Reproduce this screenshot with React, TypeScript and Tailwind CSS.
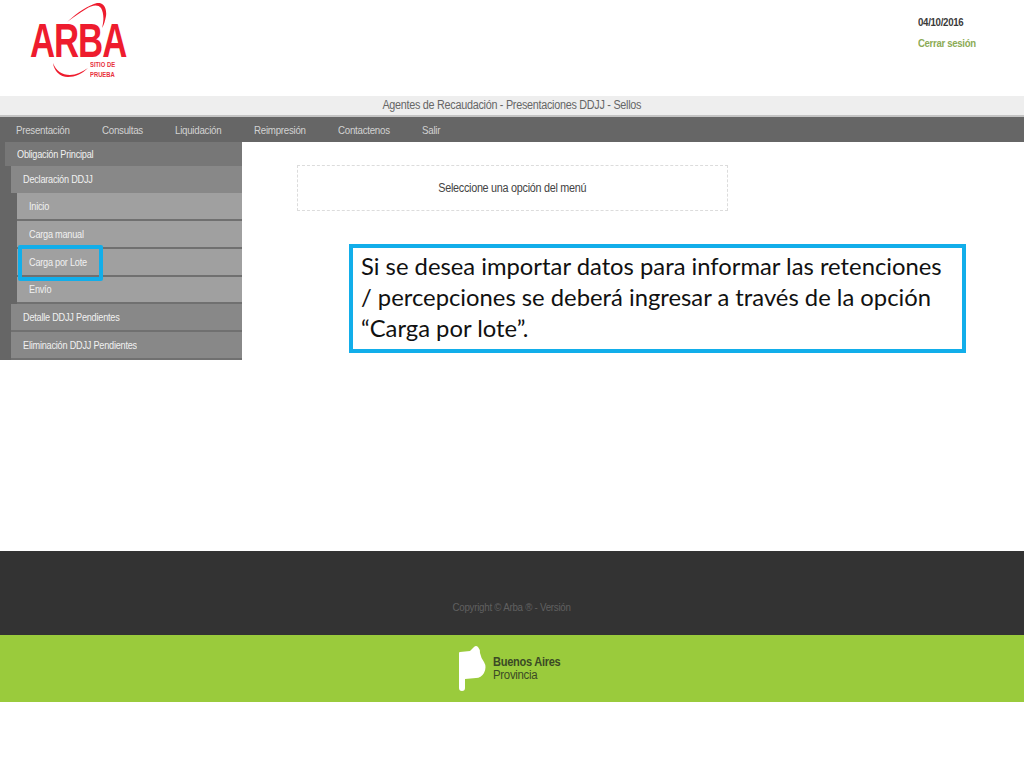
import React from "react";

const sans = "font-['Liberation_Sans',Arial,sans-serif]";

function Logo() {
  return (
    <div className="relative w-[110px] h-[84px] ml-[26px]">
      <svg className="absolute left-0 top-0" width="110" height="84" viewBox="0 0 110 84" fill="none">
        <path d="M41 19 C52 9 63 2 71 0 C78 -1 81 6 80 13 C79 18 78 22 76 25 C78 18 78 10 75 5 C72 1 66 2 60 6 C53 10 47 15 41 19Z" fill="#ee1c2e" />
        <path d="M27 60 C30 68 36 72 44 72 C50 72 56 69 62 65 C56 71 49 74 42 74 C34 74 28 68 27 60Z" fill="#ee1c2e" />
      </svg>
      <span className="absolute left-[4px] top-[17px] text-[49px] leading-[40px] font-bold text-[#ee1c2e] tracking-[-1.5px] font-['Liberation_Sans',Arial,sans-serif] scale-x-[0.71] origin-left">
        ARBA
      </span>
      <div className="absolute left-[64px] top-[57px] text-[7.5px] leading-[10px] font-bold text-[#e8303c] font-['Liberation_Sans',Arial,sans-serif] scale-x-[0.78] origin-left">
        <div>SITIO DE</div>
        <div>PRUEBA</div>
      </div>
    </div>
  );
}

function Cond({ children, className = "origin-left scale-x-[0.87]" }: { children: React.ReactNode; className?: string }) {
  return <span className={`inline-block whitespace-nowrap ${className}`}>{children}</span>;
}

function Row({ label, className }: { label: string; className: string }) {
  return (
    <div className={`flex items-center pt-[1px] text-[10.5px] tracking-[-0.25px] text-[#f1f1f1] ${className}`}>
      <Cond>{label}</Cond>
    </div>
  );
}

export default function App() {
  return (
    <div className={`relative w-[1024px] h-[768px] bg-white overflow-hidden ${sans}`}>
      <header className="h-[96px] flex justify-between">
        <div className="pt-[3px]">
          <Logo />
        </div>
        <div className="w-[106px] pt-[15px] text-[11px] tracking-[-0.35px]">
          <div className="font-bold text-[#3a3a3a] leading-[14px]"><Cond className="origin-left scale-x-[0.88]">04/10/2016</Cond></div>
          <div className="font-bold text-[#8cab55] leading-[14px] mt-[7px]"><Cond>Cerrar sesión</Cond></div>
        </div>
      </header>

      <div className="h-[19px] bg-[#eeeeee] flex items-center justify-center pb-[2px] text-[12px] tracking-[-0.3px] text-[#666666]">
        <Cond className="origin-center scale-x-[0.9]">Agentes de Recaudación - Presentaciones DDJJ - Sellos</Cond>
      </div>
      <div className="h-[2px] bg-[#c4c4c4]" />
      <nav className="h-[25px] bg-[#666666] flex items-center pl-[16px] pt-[2px] text-[11px] tracking-[-0.3px] text-[#d2d2d2]">
        <span className="w-[86px]"><Cond className="origin-left scale-x-[0.885]">Presentación</Cond></span>
        <span className="w-[73px]"><Cond className="origin-left scale-x-[0.885]">Consultas</Cond></span>
        <span className="w-[79px]"><Cond className="origin-left scale-x-[0.885]">Liquidación</Cond></span>
        <span className="w-[84px]"><Cond className="origin-left scale-x-[0.885]">Reimpresión</Cond></span>
        <span className="w-[84px]"><Cond className="origin-left scale-x-[0.885]">Contactenos</Cond></span>
        <span><Cond className="origin-left scale-x-[0.885]">Salir</Cond></span>
      </nav>

      <main className="h-[409px] flex items-start">
        <aside className="w-[242px] h-[218px] bg-[#666666] pl-[5px] flex flex-col">
          <Row label="Obligación Principal" className="h-[24px] bg-[#777777] pl-[12px]" />
          <div className="pl-[6px] flex flex-col flex-1">
            <Row label="Declaración DDJJ" className="h-[27px] bg-[#888888] pl-[12px]" />
            <div className="pl-[6px] flex flex-col">
              <Row label="Inicio" className="h-[28px] bg-[#a0a0a0] border-b-2 border-[#707070] pl-[12px]" />
              <Row label="Carga manual" className="h-[28px] bg-[#a0a0a0] border-b-2 border-[#707070] pl-[12px]" />
              <Row label="Carga por Lote" className="h-[28px] bg-[#a0a0a0] border-b-2 border-[#707070] pl-[12px]" />
              <Row label="Envío" className="h-[27px] bg-[#a0a0a0] border-b-2 border-[#707070] pl-[12px]" />
            </div>
            <Row label="Detalle DDJJ Pendientes" className="h-[28px] bg-[#888888] border-b-2 border-[#707070] pl-[12px]" />
            <Row label="Eliminación DDJJ Pendientes" className="h-[28px] bg-[#888888] border-b-2 border-[#707070] pl-[12px]" />
          </div>
        </aside>
        <div className="ml-[55px] mt-[23px] w-[431px] h-[46px] border border-dashed border-[#dcdcdc] flex items-center justify-center text-[12px] tracking-[-0.3px] text-[#444444]">
          <Cond className="origin-center scale-x-[0.9]">Seleccione una opción del menú</Cond>
        </div>
      </main>

      <div className="h-[84px] bg-[#333333] flex items-center justify-center pt-[28px] text-[11px] tracking-[-0.3px] text-[#606060]">
        <Cond className="origin-center scale-x-[0.887]">Copyright © Arba ® - Versión</Cond>
      </div>
      <div className="h-[67px] bg-[#9acb3c] flex items-center justify-center gap-[7px] pl-[1px]">
        <svg width="27" height="46" viewBox="0 0 27 46" fill="#ffffff">
          <path d="M0 7 Q0 6 1 6 L11 5 L15 1 Q17 -1 19 1 Q21 3 21 7 Q22 12 25 16 Q28 21 25 27 Q22 32 17 32 L6 33 L6 42 Q6 45 3 45 Q0 45 0 42 Z" />
        </svg>
        <div className="flex flex-col text-[#3b4a25] text-[12px] leading-[13px] tracking-[-0.3px]">
          <span className="font-bold"><Cond className="origin-left scale-x-[0.92]">Buenos Aires</Cond></span>
          <span><Cond className="origin-left scale-x-[0.95]">Provincia</Cond></span>
        </div>
      </div>

      <div className="absolute left-[18px] top-[245px] w-[85px] h-[36px] border-4 border-[#12aeea] rounded-[2px]" />

      <div className="absolute left-[349px] top-[244px] w-[617px] h-[109px] border-4 border-[#12aeea] bg-white pl-[8px] pt-[3px] text-[23.8px] leading-[31px] text-[#111111] font-['Lato',sans-serif]">
        <div>Si se desea importar datos para informar las retenciones</div>
        <div>/ percepciones se deberá ingresar a través de la opción</div>
        <div>“Carga por lote”.</div>
      </div>
    </div>
  );
}
